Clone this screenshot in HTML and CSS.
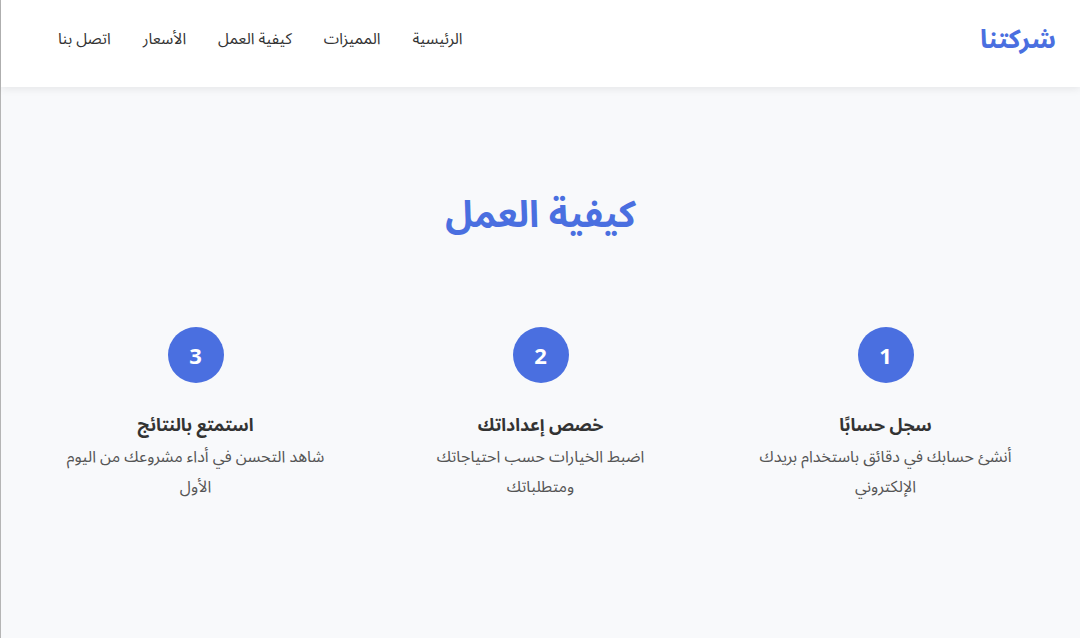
FILE: index.html
```html
<!DOCTYPE html>
<html lang="ar" dir="rtl">
<head>
<meta charset="utf-8">
<title>شركتنا</title>
<link rel="stylesheet" href="styles.css">
</head>
<body>
<div class="page">
  <header class="header">
    <div class="logo">شركتنا</div>
    <nav class="nav">
      <a href="#">الرئيسية</a>
      <a href="#">المميزات</a>
      <a href="#">كيفية العمل</a>
      <a href="#">الأسعار</a>
      <a href="#">اتصل بنا</a>
    </nav>
  </header>
  <main class="how">
    <h1 class="how-title">كيفية العمل</h1>
    <div class="steps">
      <div class="step">
        <div class="num">1</div>
        <h3 class="step-title">سجل حسابًا</h3>
        <p class="step-desc">أنشئ حسابك في دقائق باستخدام بريدك الإلكتروني</p>
      </div>
      <div class="step">
        <div class="num">2</div>
        <h3 class="step-title">خصص إعداداتك</h3>
        <p class="step-desc">اضبط الخيارات حسب احتياجاتك ومتطلباتك</p>
      </div>
      <div class="step">
        <div class="num">3</div>
        <h3 class="step-title">استمتع بالنتائج</h3>
        <p class="step-desc">شاهد التحسن في أداء مشروعك من اليوم الأول</p>
      </div>
    </div>
  </main>
</div>
</body>
</html>
```

FILE: styles.css
```css
* { box-sizing: border-box; }
html, body { margin: 0; padding: 0; }
body {
  background: #f8f9fb;
  font-family: "Noto Sans Arabic", "Noto Sans", sans-serif;
  color: #333;
}
.page {
  min-height: 638px;
  border-left: 1px solid #b5b5b5;
}
.header {
  height: 87px;
  background: #fff;
  box-shadow: 0 2px 8px rgba(0,0,0,0.08);
  display: flex;
  align-items: center;
  justify-content: space-between;
  padding: 0 24px 8px 57px;
  position: relative;
}
.logo {
  font-size: 26px;
  font-weight: 700;
  color: #4a6fe0;
}
.nav {
  display: flex;
  gap: 32px;
}
.nav a {
  color: #333;
  text-decoration: none;
  font-size: 15.6px;
}
.how {
  padding: 98px 22px 0;
  text-align: center;
}
.how-title {
  margin: 0;
  font-size: 37px;
  font-weight: 700;
  color: #4a6fe0;
  line-height: 60px;
}
.steps {
  margin-top: 82px;
  display: grid;
  grid-template-columns: repeat(3, 1fr);
}
.step {
  padding: 0 40px;
  display: flex;
  flex-direction: column;
  align-items: center;
}
.num {
  width: 56px;
  height: 56px;
  border-radius: 50%;
  background: #4a6fe0;
  color: #fff;
  font-family: "Noto Sans", sans-serif;
  font-weight: 700;
  font-size: 22px;
  display: flex;
  align-items: center;
  justify-content: center;
}
.step-title {
  margin: 27px 0 0;
  font-size: 17.6px;
  font-weight: 700;
  color: #333;
  line-height: 32px;
}
.step-desc {
  margin: 0;
  font-size: 16px;
  color: #555;
  line-height: 30px;
}
```
